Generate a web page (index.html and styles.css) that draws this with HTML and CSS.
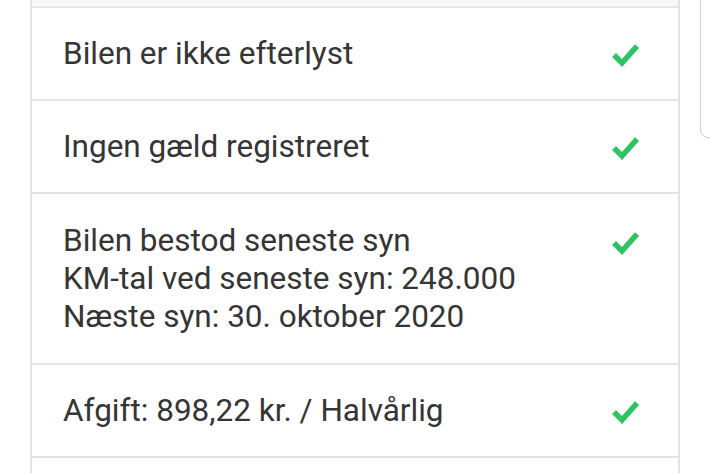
FILE: index.html
```html
<!DOCTYPE html>
<html lang="da">
<head>
<meta charset="utf-8">
<link rel="stylesheet" href="styles.css">
</head>
<body>
<div class="page">
  <div class="list">
    <div class="row row-cut"></div>
    <div class="row">
      <div class="text">Bilen er ikke efterlyst</div>
      <svg class="check" viewBox="0 0 28 26"><polyline points="3,14 11,22 26,5"/></svg>
    </div>
    <div class="row">
      <div class="text">Ingen gæld registreret</div>
      <svg class="check" viewBox="0 0 28 26"><polyline points="3,14 11,22 26,5"/></svg>
    </div>
    <div class="row row-multi">
      <div class="text">
        <div>Bilen bestod seneste syn</div>
        <div>KM-tal ved seneste syn: 248.000</div>
        <div>Næste syn: 30. oktober 2020</div>
      </div>
      <svg class="check" viewBox="0 0 28 26"><polyline points="3,14 11,22 26,5"/></svg>
    </div>
    <div class="row">
      <div class="text">Afgift: 898,22 kr. / Halvårlig</div>
      <svg class="check" viewBox="0 0 28 26"><polyline points="3,14 11,22 26,5"/></svg>
    </div>
    <div class="row row-tail"></div>
  </div>
  <div class="thumb"></div>
</div>
</body>
</html>
```

FILE: styles.css
```css
html, body {
  margin: 0;
  padding: 0;
  background: #ffffff;
  height: 473px;
  overflow: hidden;
}

.page {
  position: relative;
  height: 473px;
  overflow: hidden;
  font-family: Roboto, "Noto Sans", sans-serif;
  color: #353535;
}

.list {
  margin-left: 30px;
  width: 646px;
  border-left: 2px solid #e3e3e3;
  border-right: 2px solid #e3e3e3;
}

.row {
  display: flex;
  align-items: flex-start;
  justify-content: space-between;
  padding: 26px 39px 26px 31px;
  border-bottom: 2px solid #e3e3e3;
  height: 39px;
}

.row-cut {
  padding: 0;
  background: #f8f8f8;
  border-bottom: 2px solid #e6e6e6;
  box-sizing: border-box;
  height: 8px;
}

.row-multi {
  height: auto;
  padding-top: 28px;
  padding-bottom: 27px;
}

.row-multi .text {
  line-height: 38px;
}

.row-tail {
  height: 40px;
}

.text {
  font-size: 31.5px;
  line-height: 39px;
}

.check {
  flex: none;
  width: 28px;
  height: 26px;
  margin-top: 7px;
}

.check polyline {
  fill: none;
  stroke: #2fc462;
  stroke-width: 5.5;
  stroke-linejoin: miter;
}

.thumb {
  position: absolute;
  left: 700px;
  top: -10px;
  width: 30px;
  height: 146px;
  border: 1px solid #cfcfcf;
  border-radius: 0 0 0 8px;
  background: #ffffff;
}
```
